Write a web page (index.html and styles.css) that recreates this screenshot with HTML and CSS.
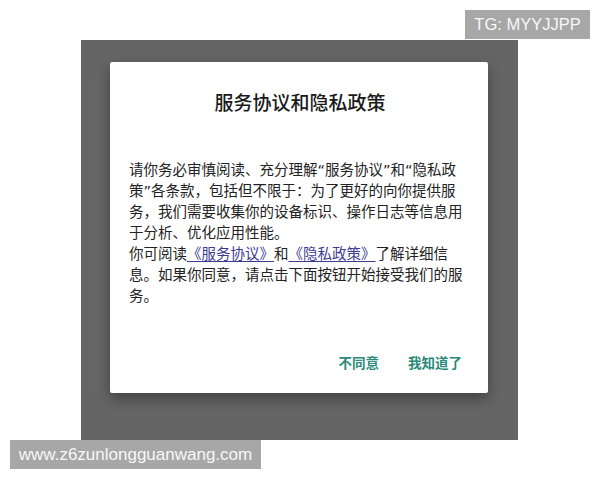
FILE: index.html
```html
<!DOCTYPE html>
<html lang="zh-CN">
<head>
<meta charset="utf-8">
<title>服务协议和隐私政策</title>
<link rel="stylesheet" href="styles.css">
</head>
<body>
<div class="page">
  <div class="top-row">
    <div class="tag">TG: MYYJJPP</div>
  </div>
  <div class="backdrop">
    <div class="dialog">
      <h1 class="title">服务协议和隐私政策</h1>
      <div class="body">
        <p class="para">请你务必审慎阅读、充分理解“服务协议”和“隐私政策”各条款，包括但不限于：为了更好的向你提供服务，我们需要收集你的设备标识、操作日志等信息用于分析、优化应用性能。</p>
        <p class="para">你可阅读<a class="link" href="#">《服务协议》</a>和<a class="link" href="#">《隐私政策》</a>了解详细信息。如果你同意，请点击下面按钮开始接受我们的服务。</p>
      </div>
      <div class="actions">
        <button class="btn">不同意</button>
        <button class="btn">我知道了</button>
      </div>
    </div>
  </div>
  <div class="site">www.z6zunlongguanwang.com</div>
</div>
</body>
</html>
```
FILE: styles.css
```css
html, body {
  margin: 0;
  padding: 0;
  background: #ffffff;
}
.page {
  width: 600px;
  height: 480px;
  display: flex;
  flex-direction: column;
  font-family: "Noto Sans CJK SC", "Noto Sans", sans-serif;
}
.top-row {
  display: flex;
  justify-content: flex-end;
  padding-top: 10px;
  padding-right: 10px;
  height: 40px;
  box-sizing: border-box;
}
.tag {
  width: 125px;
  height: 29px;
  background: #a7a7a7;
  color: #f7f7f7;
  font-family: "Liberation Sans", Arial, sans-serif;
  font-size: 16.5px;
  line-height: 29px;
  text-align: center;
}
.backdrop {
  margin-left: 81px;
  width: 437px;
  height: 400px;
  flex-shrink: 0;
  background: #656565;
  padding-top: 22px;
  padding-left: 29px;
  box-sizing: border-box;
}
.dialog {
  width: 378px;
  height: 331px;
  background: #ffffff;
  border-radius: 2px;
  box-shadow: 0 6px 14px rgba(0, 0, 0, 0.35);
  box-sizing: border-box;
  padding: 27px 23px 0 19px;
  display: flex;
  flex-direction: column;
}
.title {
  margin: 0;
  font-size: 19px;
  line-height: 26px;
  font-weight: 500;
  color: #1a1a1a;
  text-align: center;
  padding-left: 6px;
}
.body {
  margin-top: 44.5px;
  font-family: "DejaVu Sans", "Noto Sans CJK SC", sans-serif;
  font-size: 14.5px;
  line-height: 21px;
  color: #222222;
}
.para {
  margin: 0;
}
.link {
  color: #3d3a92;
  text-decoration: underline;
  text-underline-offset: 2px;
}
.actions {
  margin-top: 45.5px;
  display: flex;
  justify-content: flex-end;
  gap: 29px;
  padding-right: 3px;
}
.btn {
  border: none;
  background: none;
  padding: 0;
  font-family: "Noto Sans CJK SC", sans-serif;
  font-size: 13.5px;
  line-height: 20px;
  font-weight: 700;
  color: #2a8a79;
}
.site {
  margin-left: 10px;
  width: 251px;
  height: 29px;
  flex-shrink: 0;
  background: #a7a7a7;
  color: #f7f7f7;
  font-family: "Liberation Sans", Arial, sans-serif;
  font-size: 17px;
  line-height: 29px;
  text-align: center;
}
```
